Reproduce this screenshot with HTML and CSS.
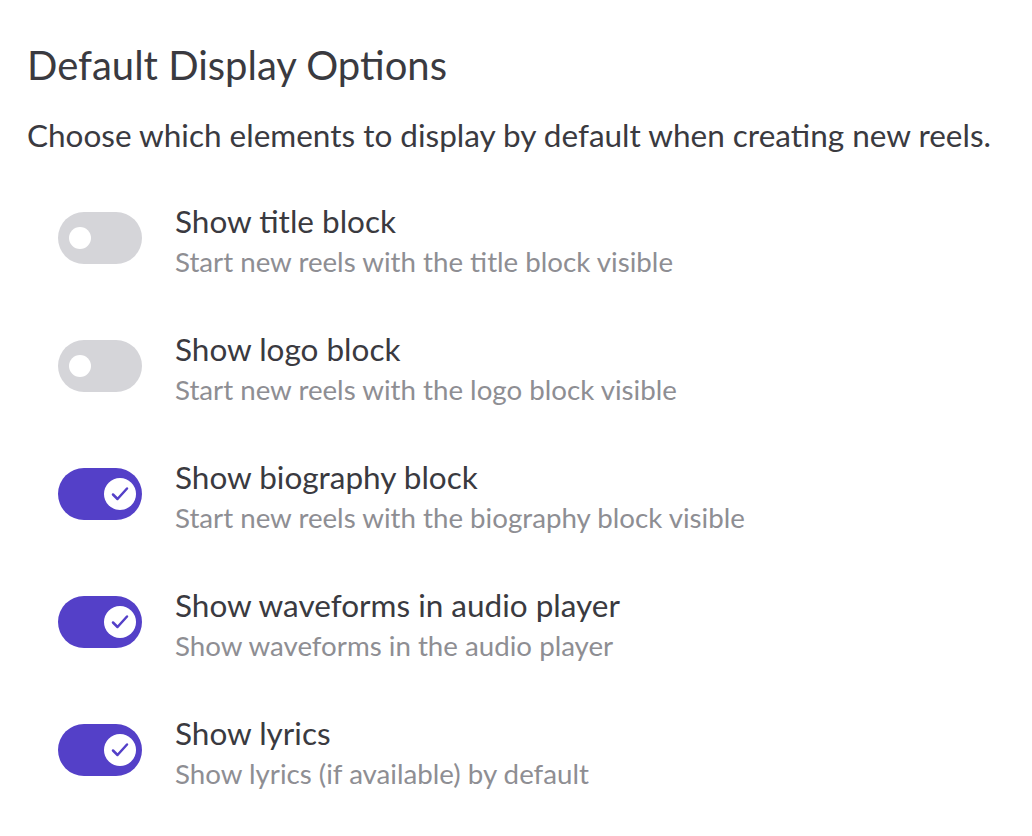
FILE: index.html
```html
<!DOCTYPE html>
<html>
<head>
<meta charset="utf-8">
<link rel="stylesheet" href="styles.css">
</head>
<body>
<main class="page">
  <h1 class="heading">Default Display Options</h1>
  <p class="intro">Choose which elements to display by default when creating new reels.</p>
  <ul class="options">
    <li class="option">
      <span class="toggle"><span class="knob"></span></span>
      <div class="text">
        <div class="label">Show title block</div>
        <div class="desc">Start new reels with the title block visible</div>
      </div>
    </li>
    <li class="option">
      <span class="toggle"><span class="knob"></span></span>
      <div class="text">
        <div class="label">Show logo block</div>
        <div class="desc">Start new reels with the logo block visible</div>
      </div>
    </li>
    <li class="option">
      <span class="toggle on"><span class="knob"><svg viewBox="0 0 32 32" width="32" height="32"><path d="M9 16.5 L13.5 21 L23 10.5" fill="none" stroke="#5440c8" stroke-width="2.5" stroke-linecap="round" stroke-linejoin="round"/></svg></span></span>
      <div class="text">
        <div class="label">Show biography block</div>
        <div class="desc">Start new reels with the biography block visible</div>
      </div>
    </li>
    <li class="option">
      <span class="toggle on"><span class="knob"><svg viewBox="0 0 32 32" width="32" height="32"><path d="M9 16.5 L13.5 21 L23 10.5" fill="none" stroke="#5440c8" stroke-width="2.5" stroke-linecap="round" stroke-linejoin="round"/></svg></span></span>
      <div class="text">
        <div class="label">Show waveforms in audio player</div>
        <div class="desc">Show waveforms in the audio player</div>
      </div>
    </li>
    <li class="option">
      <span class="toggle on"><span class="knob"><svg viewBox="0 0 32 32" width="32" height="32"><path d="M9 16.5 L13.5 21 L23 10.5" fill="none" stroke="#5440c8" stroke-width="2.5" stroke-linecap="round" stroke-linejoin="round"/></svg></span></span>
      <div class="text">
        <div class="label">Show lyrics</div>
        <div class="desc">Show lyrics (if available) by default</div>
      </div>
    </li>
  </ul>
</main>
</body>
</html>
```
FILE: styles.css
```css
html, body {
  margin: 0;
  padding: 0;
  background: #ffffff;
}
body {
  font-family: Lato, "Liberation Sans", sans-serif;
  color: #3a3a40;
}
.page {
  padding: 41px 0 0 27px;
}
.heading {
  margin: 0;
  font-size: 40px;
  font-weight: 400;
  line-height: 48px;
  color: #3a3a40;
}
.intro {
  margin: 26px 0 0;
  font-size: 31.5px;
  line-height: 40px;
  color: #3a3a40;
}
.options {
  list-style: none;
  margin: 46px 0 0;
  padding: 0 0 0 31px;
  display: flex;
  flex-direction: column;
  gap: 46px;
}
.option {
  display: flex;
  align-items: flex-start;
  gap: 33px;
}
.toggle {
  flex: none;
  width: 84px;
  height: 52px;
  border-radius: 26px;
  background: #d5d5d9;
  display: flex;
  align-items: center;
  padding: 0 11px;
  box-sizing: border-box;
  margin-top: 11px;
}
.toggle .knob {
  width: 22px;
  height: 22px;
  border-radius: 50%;
  background: #ffffff;
}
.toggle.on {
  background: #5440c8;
  justify-content: flex-end;
  padding: 0 6px;
}
.toggle.on .knob {
  width: 32px;
  height: 32px;
  display: flex;
}
.toggle.on .knob svg {
  display: block;
}
.text {
  display: flex;
  flex-direction: column;
}
.label {
  font-size: 31.5px;
  line-height: 40px;
  color: #3a3a40;
}
.desc {
  font-size: 27.7px;
  line-height: 42px;
  color: #8e8e93;
}
```
